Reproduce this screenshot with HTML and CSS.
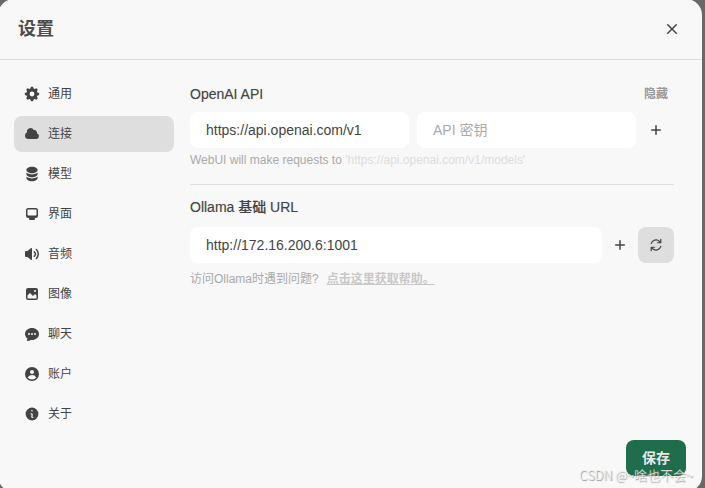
FILE: index.html
```
<!DOCTYPE html>
<html lang="zh-CN">
<head>
<meta charset="utf-8">
<meta name="viewport" content="width=device-width, initial-scale=1">
<title>设置</title>
<link rel="stylesheet" href="styles.css">
</head>
<body>
<main class="modal">
  <header class="modal-header">
    <h1>设置</h1>
    <button class="close" type="button" aria-label="关闭">
      <svg class="icon-large" viewBox="0 0 20 20"><path d="M6.28 5.22a.75.75 0 00-1.06 1.06L8.94 10l-3.72 3.72a.75.75 0 101.06 1.06L10 11.06l3.72 3.72a.75.75 0 101.06-1.06L11.06 10l3.72-3.72a.75.75 0 00-1.06-1.06L10 8.94 6.28 5.22z"/></svg>
    </button>
  </header>
  <div class="modal-body">
    <nav class="tabs">
      <button class="tab" type="button">
        <svg class="icon" viewBox="0 0 20 20"><path fill-rule="evenodd" d="M8.34 1.804A1 1 0 0 1 9.32 1h1.36a1 1 0 0 1 .98.804l.295 1.473c.497.144.971.342 1.416.587l1.25-.834a1 1 0 0 1 1.262.125l.962.962a1 1 0 0 1 .125 1.262l-.834 1.25c.245.445.443.919.587 1.416l1.473.294a1 1 0 0 1 .804.98v1.361a1 1 0 0 1-.804.98l-1.473.295a6.95 6.95 0 0 1-.587 1.416l.834 1.25a1 1 0 0 1-.125 1.262l-.962.962a1 1 0 0 1-1.262.125l-1.25-.834a6.953 6.953 0 0 1-1.416.587l-.294 1.473a1 1 0 0 1-.98.804H9.32a1 1 0 0 1-.98-.804l-.295-1.473a6.957 6.957 0 0 1-1.416-.587l-1.25.834a1 1 0 0 1-1.262-.125l-.962-.962a1 1 0 0 1-.125-1.262l.834-1.25a6.957 6.957 0 0 1-.587-1.416l-1.473-.294A1 1 0 0 1 1 10.68V9.32a1 1 0 0 1 .804-.98l1.473-.295c.144-.497.342-.971.587-1.416l-.834-1.25a1 1 0 0 1 .125-1.262l.962-.962A1 1 0 0 1 5.38 3.03l1.25.834a6.957 6.957 0 0 1 1.416-.587l.294-1.473ZM13 10a3 3 0 1 1-6 0 3 3 0 0 1 6 0Z"/></svg>
        <span>通用</span>
      </button>
      <button class="tab tab-active" type="button">
        <svg class="icon" viewBox="0 0 16 16"><path d="M1 9.5A3.5 3.5 0 0 0 4.5 13H12a3 3 0 0 0 .917-5.857 2.503 2.503 0 0 0-3.198-3.019 3.5 3.5 0 0 0-6.628 2.171A3.5 3.5 0 0 0 1 9.5Z"/></svg>
        <span>连接</span>
      </button>
      <button class="tab" type="button">
        <svg class="icon" viewBox="0 0 20 20"><path d="M10 1c3.866 0 7 1.79 7 4s-3.134 4-7 4-7-1.79-7-4 3.134-4 7-4zm5.694 8.13c.464-.264.91-.583 1.306-.952V10c0 2.21-3.134 4-7 4s-7-1.79-7-4V8.178c.396.37.842.688 1.306.953C5.838 10.006 7.854 10.5 10 10.5s4.162-.494 5.694-1.37zM3 13.179V15c0 2.21 3.134 4 7 4s7-1.79 7-4v-1.822c-.396.37-.842.688-1.306.953-1.532.875-3.548 1.369-5.694 1.369s-4.162-.494-5.694-1.37A7.009 7.009 0 013 13.179z"/></svg>
        <span>模型</span>
      </button>
      <button class="tab" type="button">
        <svg class="icon" viewBox="0 0 16 16"><path fill-rule="evenodd" d="M2 4.25A2.25 2.25 0 0 1 4.25 2h7.5A2.25 2.25 0 0 1 14 4.25v5.5A2.25 2.25 0 0 1 11.75 12h-1.312c.1.128.21.248.328.36a.75.75 0 0 1 .234.545v.345a.75.75 0 0 1-.75.75h-4.5a.75.75 0 0 1-.75-.75v-.345a.75.75 0 0 1 .234-.545c.118-.111.228-.232.328-.36H4.25A2.25 2.25 0 0 1 2 9.75v-5.5Zm2.25-.75a.75.75 0 0 0-.75.75v4.5c0 .414.336.75.75.75h7.5a.75.75 0 0 0 .75-.75v-4.5a.75.75 0 0 0-.75-.75h-7.5Z"/></svg>
        <span>界面</span>
      </button>
      <button class="tab" type="button">
        <svg class="icon" viewBox="0 0 16 16"><path d="M7.557 2.066A.75.75 0 0 1 8 2.75v10.5a.75.75 0 0 1-1.248.56L3.59 11H2a1 1 0 0 1-1-1V6a1 1 0 0 1 1-1h1.59l3.162-2.81a.75.75 0 0 1 .805-.124ZM12.95 3.05a.75.75 0 1 0-1.06 1.06 5.5 5.5 0 0 1 0 7.78.75.75 0 1 0 1.06 1.06 7 7 0 0 0 0-9.9Z"/><path d="M10.828 5.172a.75.75 0 1 0-1.06 1.06 2.5 2.5 0 0 1 0 3.536.75.75 0 1 0 1.06 1.06 4 4 0 0 0 0-5.656Z"/></svg>
        <span>音频</span>
      </button>
      <button class="tab" type="button">
        <svg class="icon" viewBox="0 0 16 16"><path fill-rule="evenodd" d="M2 4a2 2 0 0 1 2-2h8a2 2 0 0 1 2 2v8a2 2 0 0 1-2 2H4a2 2 0 0 1-2-2V4Zm10.5 5.707a.5.5 0 0 0-.146-.353l-1-1a.5.5 0 0 0-.708 0L9.354 9.646a.5.5 0 0 1-.708 0L6.354 7.354a.5.5 0 0 0-.708 0l-2 2a.5.5 0 0 0-.146.353V12a.5.5 0 0 0 .5.5h8a.5.5 0 0 0 .5-.5V9.707ZM12 5a1 1 0 1 1-2 0 1 1 0 0 1 2 0Z"/></svg>
        <span>图像</span>
      </button>
      <button class="tab" type="button">
        <svg class="icon" viewBox="0 0 16 16"><path fill-rule="evenodd" d="M8 2C4.262 2 1 4.57 1 8c0 1.86.98 3.486 2.455 4.566a3.472 3.472 0 0 1-.469 1.26.75.75 0 0 0 .713 1.14 6.961 6.961 0 0 0 3.06-1.06c.403.062.818.094 1.241.094 3.738 0 7-2.57 7-6s-3.262-6-7-6ZM5 9a1 1 0 1 0 0-2 1 1 0 0 0 0 2Zm7-1a1 1 0 1 1-2 0 1 1 0 0 1 2 0ZM8 9a1 1 0 1 0 0-2 1 1 0 0 0 0 2Z"/></svg>
        <span>聊天</span>
      </button>
      <button class="tab" type="button">
        <svg class="icon" viewBox="0 0 16 16"><path fill-rule="evenodd" d="M15 8A7 7 0 1 1 1 8a7 7 0 0 1 14 0Zm-5-2a2 2 0 1 1-4 0 2 2 0 0 1 4 0ZM8 9c-1.825 0-3.422.977-4.295 2.437A5.49 5.49 0 0 0 8 13.5a5.49 5.49 0 0 0 4.294-2.063A4.997 4.997 0 0 0 8 9Z"/></svg>
        <span>账户</span>
      </button>
      <button class="tab" type="button">
        <svg class="icon" viewBox="0 0 20 20"><path fill-rule="evenodd" d="M18 10a8 8 0 11-16 0 8 8 0 0116 0zm-7-4a1 1 0 11-2 0 1 1 0 012 0zM9 9a.75.75 0 000 1.5h.253a.25.25 0 01.244.304l-.459 2.066A1.75 1.75 0 0010.747 15H11a.75.75 0 000-1.5h-.253a.25.25 0 01-.244-.304l.459-2.066A1.75 1.75 0 009.253 9H9z"/></svg>
        <span>关于</span>
      </button>
    </nav>
    <form class="panel">
      <div class="fields">
        <section class="group">
          <div class="group-head">
            <label for="openai-url">OpenAI API</label>
            <button class="toggle" type="button">隐藏</button>
          </div>
          <div class="row">
            <input class="field" id="openai-url" type="text" value="https://api.openai.com/v1">
            <input class="field" type="text" placeholder="API 密钥" aria-label="API 密钥">
            <button class="add" type="button" aria-label="添加">
              <svg class="icon" viewBox="0 0 16 16"><path d="M8.75 3.75a.75.75 0 0 0-1.5 0v3.5h-3.5a.75.75 0 0 0 0 1.5h3.5v3.5a.75.75 0 0 0 1.5 0v-3.5h3.5a.75.75 0 0 0 0-1.5h-3.5v-3.5Z"/></svg>
            </button>
          </div>
          <p class="hint">WebUI will make requests to <span class="endpoint">'https://api.openai.com/v1/models'</span></p>
        </section>
        <hr>
        <section class="group group-ollama">
          <div class="group-head">
            <label for="ollama-url">Ollama 基础 URL</label>
          </div>
          <div class="row">
            <input class="field" id="ollama-url" type="text" value="http://172.16.200.6:1001">
            <button class="add" type="button" aria-label="添加">
              <svg class="icon" viewBox="0 0 16 16"><path d="M8.75 3.75a.75.75 0 0 0-1.5 0v3.5h-3.5a.75.75 0 0 0 0 1.5h3.5v3.5a.75.75 0 0 0 1.5 0v-3.5h3.5a.75.75 0 0 0 0-1.5h-3.5v-3.5Z"/></svg>
            </button>
            <button class="refresh" type="button" aria-label="刷新">
              <svg class="icon" viewBox="0 0 20 20"><path d="M15.312 11.424a5.5 5.5 0 01-9.201 2.466l-.312-.311h2.433a.75.75 0 000-1.5H3.989a.75.75 0 00-.75.75v4.242a.75.75 0 001.5 0v-2.43l.31.31a7 7 0 0011.712-3.138.75.75 0 00-1.449-.39zm1.23-3.723a.75.75 0 00.219-.53V2.929a.75.75 0 00-1.5 0V5.36l-.31-.31A7 7 0 003.239 8.188a.75.75 0 101.448.389A5.5 5.5 0 0113.89 6.11l.311.31h-2.432a.75.75 0 000 1.5h4.243a.75.75 0 00.53-.219z"/></svg>
            </button>
          </div>
          <p class="hint">访问Ollama时遇到问题?<a href="#help">点击这里获取帮助。</a></p>
        </section>
      </div>
      <button class="save" type="submit">保存</button>
    </form>
  </div>
</main>
<div class="watermark">CSDN @~啥也不会~</div>
</body>
</html>
```
FILE: styles.css
```
* {
  box-sizing: border-box;
}

body {
  margin: 0;
  height: 100vh;
  overflow: hidden;
  position: relative;
  background: #686868;
  color: #444;
  font-family: "Liberation Sans", "Noto Sans CJK SC", sans-serif;
  font-size: 14px;
  line-height: 20px;
}

button,
input {
  font: inherit;
  color: inherit;
  border: 0;
  padding: 0;
  background: none;
}

h1,
p {
  margin: 0;
}

svg {
  display: block;
  fill: currentColor;
}

.icon {
  width: 16px;
  height: 16px;
}

.icon-large {
  width: 20px;
  height: 20px;
}

/* The dialog runs slightly past the window on its left, top and bottom */
.modal {
  display: flex;
  flex-direction: column;
  min-height: calc(100vh + 5px);
  margin: -1px 3px 0 -2px;
  border-radius: 16px;
  background: #f8f8f8;
}

.modal-header {
  display: flex;
  justify-content: space-between;
  align-items: center;
  padding: 16px 20px;
  border-bottom: 1px solid #ddd;
}

.modal-header h1 {
  font-size: 18px;
  line-height: 28px;
  font-weight: 700;
  color: #4c4c4c;
}

.modal-body {
  flex: 1;
  display: flex;
  gap: 16px;
  padding: 16px;
}

.tabs {
  flex: 0 0 160px;
  display: flex;
  flex-direction: column;
  gap: 4px;
}

.tab {
  display: flex;
  align-items: center;
  gap: 8px;
  height: 36px;
  padding: 0 10px;
  border-radius: 8px;
  font-size: 12px;
}

.tab-active {
  background: #dedede;
}

.panel {
  flex: 1;
  min-width: 0;
  display: flex;
  flex-direction: column;
  justify-content: space-between;
}

.fields {
  padding: 8px 12px 0 0;
}

.group-head {
  display: flex;
  justify-content: space-between;
  align-items: center;
  margin-bottom: 8px;
  font-weight: 500;
}

.group-head label {
  text-shadow: 0 0 1px #9998;
}

.group-ollama .group-head {
  margin-bottom: 10px;
}

.toggle {
  padding: 0 6px;
  font-size: 12px;
  font-weight: 700;
  color: #999;
}

.row {
  display: flex;
  gap: 8px;
}

.field {
  flex: 1;
  min-width: 0;
  height: 36px;
  padding: 0 16px;
  border-radius: 8px;
  background: #fff;
}

.field::placeholder {
  color: #aaa;
  opacity: 1;
}

.add {
  padding: 0 10px 0 4px;
}

.row .add:not(:last-child) {
  padding: 0 2px;
}

.refresh {
  display: grid;
  place-items: center;
  width: 36px;
  border-radius: 8px;
  background: #dedede;
}

.hint {
  margin-top: 4px;
  font-size: 12px;
  line-height: 16px;
  color: #aaa;
}

.endpoint {
  color: #ddd;
}

.group-ollama .hint {
  margin-top: 8px;
}

.hint a {
  margin-left: 8px;
  font-weight: 700;
  color: #c8c8c8;
}

hr {
  margin: 16px 0 12px;
  border: 0;
  border-top: 1px solid #ddd;
}

.save {
  align-self: flex-end;
  padding: 8px 16px;
  border-radius: 8px;
  background: #1f6d4b;
  color: #e8e8e8;
  font-weight: 700;
}

.watermark {
  position: absolute;
  right: 12px;
  bottom: 3px;
  font-family: "Noto Sans CJK SC", sans-serif;
  font-weight: 300;
  font-size: 13px;
  color: #eee;
  text-shadow: 1px 1px 1px #888;
  pointer-events: none;
}
```
